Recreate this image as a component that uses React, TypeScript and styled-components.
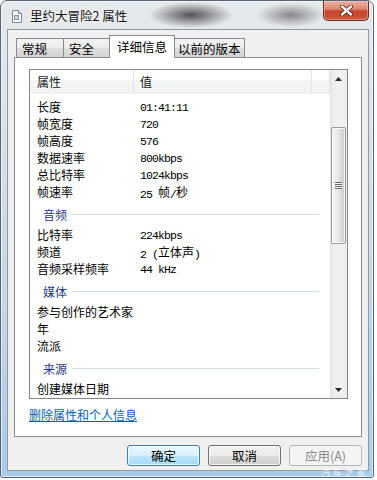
import React from "react";
import styled, { createGlobalStyle } from "styled-components";

const GlobalStyle = createGlobalStyle`
  html, body {
    margin: 0;
    padding: 0;
    background: #ffffff;
  }
  body {
    font-family: "Noto Sans CJK SC", "Microsoft YaHei", sans-serif;
    font-size: 12px;
    color: #000;
  }
`;

type Row =
  | { kind: "row"; name: string; value?: string }
  | { kind: "group"; name: string };

const rows: Row[] = [
  { kind: "row", name: "长度", value: "01:41:11" },
  { kind: "row", name: "帧宽度", value: "720" },
  { kind: "row", name: "帧高度", value: "576" },
  { kind: "row", name: "数据速率", value: "800kbps" },
  { kind: "row", name: "总比特率", value: "1024kbps" },
  { kind: "row", name: "帧速率", value: "25 帧/秒" },
  { kind: "group", name: "音频" },
  { kind: "row", name: "比特率", value: "224kbps" },
  { kind: "row", name: "频道", value: "2 (立体声)" },
  { kind: "row", name: "音频采样频率", value: "44 kHz" },
  { kind: "group", name: "媒体" },
  { kind: "row", name: "参与创作的艺术家" },
  { kind: "row", name: "年" },
  { kind: "row", name: "流派" },
  { kind: "group", name: "来源" },
  { kind: "row", name: "创建媒体日期" },
];

const Window = styled.div`
  position: relative;
  width: 374px;
  height: 478px;
  box-sizing: border-box;
  border: 1px solid #56667a;
  border-radius: 7px 7px 3px 3px;
  padding: 0 4px 6px 6px;
  display: flex;
  flex-direction: column;
  overflow: hidden;
  box-shadow: inset 0 0 0 1px rgba(255, 255, 255, 0.6);
  background:
    radial-gradient(ellipse 42px 13px at 190px 14px, rgba(45, 45, 50, 0.8), rgba(45, 45, 50, 0) 100%),
    radial-gradient(ellipse 34px 12px at 290px 14px, rgba(70, 70, 75, 0.6), rgba(70, 70, 75, 0) 100%),
    linear-gradient(to bottom, #e6e9ec 0, #d9e0e7 30%, #c2d4e6 70%, #a9cbea 100%);
`;

const TitleBar = styled.div`
  height: 28px;
  display: flex;
  align-items: center;
  flex-shrink: 0;
`;

const TitleIcon = styled.svg`
  margin-left: 5px;
  margin-top: 2px;
`;

const TitleText = styled.span`
  margin-left: 8px;
  margin-top: 1px;
  font-size: 12.5px;
  color: #111;
  text-shadow: 0 0 6px rgba(255, 255, 255, 0.9), 0 0 2px #fff;
`;

const CloseButton = styled.div`
  align-self: flex-start;
  margin-left: auto;
  width: 46px;
  height: 20px;
  box-sizing: border-box;
  border: 1px solid #6a2b22;
  border-top: none;
  border-radius: 0 0 5px 5px;
  display: flex;
  align-items: center;
  justify-content: center;
  background: linear-gradient(to bottom, #eab2a4 0, #de8a74 40%, #c6432a 55%, #cd5a3e 100%);
  box-shadow: inset 0 0 0 1px rgba(255, 210, 200, 0.45);
`;

const Client = styled.div`
  flex: 1;
  box-sizing: border-box;
  border: 1px solid #8f9aa7;
  background: #f0f0f0;
  display: flex;
  flex-direction: column;
  padding-top: 5px;
`;

const TabStrip = styled.div`
  height: 22px;
  display: flex;
  align-items: flex-end;
  padding-left: 8px;
  position: relative;
  z-index: 1;
`;

const Tab = styled.div<{ $active?: boolean }>`
  box-sizing: border-box;
  min-width: 48px;
  height: ${({ $active }) => ($active ? "23px" : "19px")};
  margin: ${({ $active }) => ($active ? "0 -2px -1px -2px" : "0 0 0 -1px")};
  padding: ${({ $active }) => ($active ? "0 7px" : "2px 3px 0 5px")};
  border: 1px solid #898c95;
  border-bottom: none;
  font-size: 12.5px;
  line-height: ${({ $active }) => ($active ? "21px" : "16px")};
  white-space: nowrap;
  position: relative;
  z-index: ${({ $active }) => ($active ? 2 : 1)};
  background: ${({ $active }) =>
    $active
      ? "#ffffff"
      : "linear-gradient(to bottom, #f3f3f3 0, #ebebeb 50%, #dedede 51%, #d4d4d4 100%)"};

  &:first-child {
    margin-left: 0;
  }
`;

const TabPanel = styled.div`
  height: 380px;
  box-sizing: border-box;
  margin: 0 6px;
  border: 1px solid #898c95;
  background: #ffffff;
  padding: 11px 13px 0 14px;
  display: flex;
  flex-direction: column;
`;

const ListView = styled.div`
  height: 330px;
  box-sizing: border-box;
  border: 1px solid #828790;
  display: flex;
  flex-shrink: 0;
`;

const ListMain = styled.div`
  flex: 1;
  display: flex;
  flex-direction: column;
  overflow: hidden;
`;

const Header = styled.div`
  height: 24px;
  display: flex;
  flex-shrink: 0;
  background: linear-gradient(to bottom, #ffffff 0, #ffffff 40%, #f4f5f7 41%, #f1f2f4 100%);
`;

const HeaderCell = styled.div<{ $width?: number; $pad?: number }>`
  box-sizing: border-box;
  width: ${({ $width }) => ($width ? `${$width}px` : "auto")};
  flex: ${({ $width }) => ($width ? "none" : "1")};
  padding-left: ${({ $pad }) => $pad ?? 0}px;
  border-right: 1px solid #e2e5e9;
  line-height: 24px;
  color: #1a1a1a;
`;

const Rows = styled.div`
  padding-top: 4px;
  display: flex;
  flex-direction: column;
`;

const PropRow = styled.div`
  display: grid;
  grid-template-columns: 104px 1fr;
  height: 17px;
  line-height: 17px;
  flex-shrink: 0;
  white-space: nowrap;
`;

const PropName = styled.div`
  padding-left: 7px;
`;

const PropValue = styled.div`
  box-sizing: border-box;
  padding: 1px 0 0 6px;
  line-height: 17px;
  font-family: "Liberation Mono", "Noto Sans CJK SC", monospace;
  font-size: 11.5px;
  letter-spacing: -0.9px;
`;

const Cjk = styled.span`
  font-family: "Noto Sans CJK SC", sans-serif;
  font-size: 12px;
  letter-spacing: 0;
  position: relative;
  top: -1px;
`;

const GroupHeader = styled.div`
  height: 26px;
  box-sizing: border-box;
  flex-shrink: 0;
  display: flex;
  align-items: center;
  gap: 5px;
  padding: 2px 11px 0 13px;
  color: #1e3a8a;

  &::after {
    content: "";
    flex: 1;
    height: 1px;
    background: #d3dde7;
  }
`;

const ScrollBar = styled.div`
  width: 17px;
  flex-shrink: 0;
  display: flex;
  flex-direction: column;
  background: linear-gradient(to right, #e3e3e3 0, #eeeeee 20%, #f1f1f1 60%, #ebebeb 100%);
`;

const ScrollArrow = styled.div`
  height: 17px;
  display: flex;
  align-items: center;
  justify-content: center;
  flex-shrink: 0;
`;

const Thumb = styled.div<{ $offset: number; $size: number }>`
  margin: ${({ $offset }) => $offset}px 1px 0 1px;
  height: ${({ $size }) => $size}px;
  box-sizing: border-box;
  border: 1px solid #9b9b9b;
  border-radius: 2px;
  display: flex;
  align-items: center;
  justify-content: center;
  flex-shrink: 0;
  background: linear-gradient(to right, #f4f4f4 0, #e9e9e9 45%, #d9d9d9 70%, #cdcdcd 100%);
  box-shadow: inset 0 0 0 1px rgba(255, 255, 255, 0.7);
`;

const Grip = styled.div`
  width: 7px;
  height: 7px;
  background: repeating-linear-gradient(to bottom, #6e6e6e 0, #6e6e6e 1px, #f4f4f4 1px, #f4f4f4 2px);
`;

const Spacer = styled.div`
  flex: 1;
`;

const RemoveLink = styled.a`
  align-self: flex-start;
  margin-top: 7px;
  line-height: 18px;
  color: #0a5fb4;
  text-decoration: underline;
  cursor: pointer;
`;

const ButtonRow = styled.div`
  display: flex;
  justify-content: flex-end;
  gap: 8px;
  padding: 8px 6px 0 0;
`;

const DialogButton = styled.div<{ $variant?: "default" | "normal" | "disabled" }>`
  width: 73px;
  height: 21px;
  box-sizing: border-box;
  border-radius: 3px;
  display: flex;
  align-items: center;
  justify-content: center;
  line-height: 19px;
  font-size: 12.5px;
  border: 1px solid
    ${({ $variant }) =>
      $variant === "default" ? "#3c7fb1" : $variant === "disabled" ? "#b4b8bb" : "#707070"};
  color: ${({ $variant }) => ($variant === "disabled" ? "#8a8a8a" : "#000")};
  background: ${({ $variant }) =>
    $variant === "default"
      ? "linear-gradient(to bottom, #eaf6fd 0, #d9f0fc 50%, #bee6fd 51%, #a7d9f5 100%)"
      : $variant === "disabled"
      ? "#f4f4f4"
      : "linear-gradient(to bottom, #f2f2f2 0, #ebebeb 50%, #dddddd 51%, #cfcfcf 100%)"};
  box-shadow: ${({ $variant }) =>
    $variant === "disabled" ? "none" : "inset 0 0 0 1px rgba(255, 255, 255, 0.75)"};
`;

const Watermark = styled.div`
  position: absolute;
  right: 4px;
  bottom: -2px;
  font-size: 9px;
  letter-spacing: 3px;
  color: rgba(255, 255, 255, 0.8);
`;

function renderValue(value: string) {
  return value
    .split(/([\u4e00-\u9fff]+)/)
    .filter((part) => part.length > 0)
    .map((part, i) =>
      /[\u4e00-\u9fff]/.test(part) ? <Cjk key={i}>{part}</Cjk> : <span key={i}>{part}</span>
    );
}

function DocIcon() {
  return (
    <TitleIcon width="10" height="13" viewBox="0 0 10 13">
      <path d="M0.5 0.5 H6.5 L9.5 3.5 V12.5 H0.5 Z" fill="#fbfbfb" stroke="#7c8794" />
      <path d="M6.5 0.5 V3.5 H9.5" fill="#dfe3e8" stroke="#7c8794" />
      <rect x="2" y="5" width="5" height="5" fill="#8a96a6" />
      <rect x="3" y="6" width="3" height="3" fill="#c9d2de" />
    </TitleIcon>
  );
}

function CloseGlyph() {
  return (
    <svg width="13" height="11" viewBox="0 0 13 11">
      <path d="M2 1.5 L11 9.5 M11 1.5 L2 9.5" stroke="#4a1a12" strokeWidth="4" strokeLinecap="round" />
      <path d="M2 1.5 L11 9.5 M11 1.5 L2 9.5" stroke="#ffffff" strokeWidth="2.4" strokeLinecap="round" />
    </svg>
  );
}

function Arrow({ up }: { up?: boolean }) {
  return (
    <svg width="7" height="4" viewBox="0 0 7 4">
      <path d={up ? "M0 4 L3.5 0 L7 4 Z" : "M0 0 L3.5 4 L7 0 Z"} fill="#2b2b2b" />
    </svg>
  );
}

const tabs = ["常规", "安全", "详细信息", "以前的版本"];

export default function App() {
  return (
    <>
      <GlobalStyle />
      <Window>
        <TitleBar>
          <DocIcon />
          <TitleText>里约大冒险2 属性</TitleText>
          <CloseButton>
            <CloseGlyph />
          </CloseButton>
        </TitleBar>
        <Client>
          <TabStrip>
            {tabs.map((t) => (
              <Tab key={t} $active={t === "详细信息"}>
                {t}
              </Tab>
            ))}
          </TabStrip>
          <TabPanel>
            <ListView>
              <ListMain>
                <Header>
                  <HeaderCell $width={104} $pad={7}>属性</HeaderCell>
                  <HeaderCell $width={178} $pad={6}>值</HeaderCell>
                  <HeaderCell />
                </Header>
                <Rows>
                  {rows.map((r, i) =>
                    r.kind === "group" ? (
                      <GroupHeader key={i}>{r.name}</GroupHeader>
                    ) : (
                      <PropRow key={i}>
                        <PropName>{r.name}</PropName>
                        <PropValue>{r.value ? renderValue(r.value) : null}</PropValue>
                      </PropRow>
                    )
                  )}
                </Rows>
              </ListMain>
              <ScrollBar>
                <ScrollArrow>
                  <Arrow up />
                </ScrollArrow>
                <Thumb $offset={40} $size={117}>
                  <Grip />
                </Thumb>
                <Spacer />
                <ScrollArrow>
                  <Arrow />
                </ScrollArrow>
              </ScrollBar>
            </ListView>
            <RemoveLink>删除属性和个人信息</RemoveLink>
          </TabPanel>
          <ButtonRow>
            <DialogButton $variant="default">确定</DialogButton>
            <DialogButton>取消</DialogButton>
            <DialogButton $variant="disabled">应用(A)</DialogButton>
          </ButtonRow>
        </Client>
        <Watermark>汽车之家</Watermark>
      </Window>
    </>
  );
}
